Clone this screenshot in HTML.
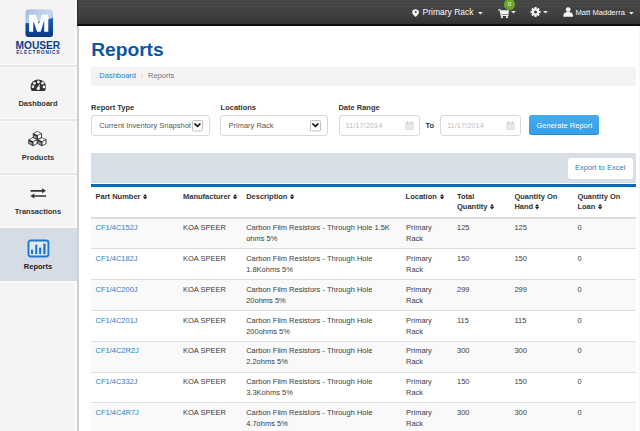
<!DOCTYPE html>
<html><head><meta charset="utf-8"><title>Reports</title>
<style>
html,body{margin:0;padding:0;width:640px;height:431px;overflow:hidden;background:#fff;font-family:"Liberation Sans",sans-serif;}
.t{position:absolute;white-space:nowrap;font-family:"Liberation Sans",sans-serif;}
svg{display:block}
</style></head><body>
<div style="position:absolute;left:0;top:0;width:77px;height:431px;background:#f4f4f4"></div>
<div style="position:absolute;left:74px;top:0;width:3px;height:431px;background:#f8f8f8"></div>
<div style="position:absolute;left:77px;top:25px;width:2px;height:406px;background:#cdd0d4"></div>
<div style="position:absolute;left:0;top:64px;width:77px;height:1px;background:#fbfbfb"></div>
<div style="position:absolute;left:0;top:65px;width:77px;height:1.6px;background:#e6e6e6"></div>
<div style="position:absolute;left:0;top:66.6px;width:77px;height:0.8px;background:#fafafa"></div>
<div style="position:absolute;left:0;top:118.2px;width:77px;height:1px;background:#fbfbfb"></div>
<div style="position:absolute;left:0;top:119.2px;width:77px;height:1.6px;background:#e6e6e6"></div>
<div style="position:absolute;left:0;top:120.8px;width:77px;height:0.8px;background:#fafafa"></div>
<div style="position:absolute;left:0;top:172px;width:77px;height:1px;background:#fbfbfb"></div>
<div style="position:absolute;left:0;top:173px;width:77px;height:1.6px;background:#e6e6e6"></div>
<div style="position:absolute;left:0;top:174.6px;width:77px;height:0.8px;background:#fafafa"></div>
<div style="position:absolute;left:0;top:227px;width:77px;height:1px;background:#fbfbfb"></div>
<div style="position:absolute;left:0;top:228px;width:77px;height:53.3px;background:#d5dce5"></div>
<div style="position:absolute;left:0;top:281.3px;width:77px;height:2px;background:#fafafa"></div>
<svg style="position:absolute;left:24.7px;top:9.3px" width="28.5" height="28.5" viewBox="0 0 28.5 28.5">
<defs><linearGradient id="lgt" x1="0" y1="0" x2="1" y2="1">
<stop offset="0" stop-color="#9dbbe0"/><stop offset="0.5" stop-color="#c9daee"/><stop offset="1" stop-color="#7fa6d4"/></linearGradient>
<linearGradient id="lgb" x1="0" y1="0" x2="0" y2="1">
<stop offset="0" stop-color="#1666b8"/><stop offset="0.5" stop-color="#0d4c9e"/><stop offset="1" stop-color="#083783"/></linearGradient>
<clipPath id="cp"><rect x="0.5" y="0.5" width="27.5" height="27.5" rx="3"/></clipPath></defs>
<g clip-path="url(#cp)">
<rect x="0" y="0" width="28.5" height="28.5" fill="url(#lgt)"/>
<path d="M0 14.3 C9 13.8 18 12.5 28.5 8.6 L28.5 28.5 L0 28.5 Z" fill="url(#lgb)"/>
</g>
<path d="M4.1 5.8 L10.9 5.8 L13.9 15.2 L16.9 5.8 L23.3 5.8 L23.3 22.7 L19.2 22.7 L19.2 11.2 L15.7 22.7 L12.1 22.7 L8.2 11.2 L8.2 22.7 L4.1 22.7 Z" fill="#fff"/>
</svg>
<div class="t" style="left:15.6px;top:40.98px;font-size:10.2px;line-height:10.2px;font-weight:bold;color:#0d3f8f;letter-spacing:-0.05px;transform:scaleY(1.02);transform-origin:top left">MOUSER</div>
<div class="t" style="left:16.2px;top:51.24px;font-size:4.8px;line-height:4.8px;font-weight:bold;color:#0d3f8f;letter-spacing:0.9px">ELECTRONICS</div>
<div class="t" style="left:-2px;width:80px;text-align:center;top:100.21px;font-size:7.5px;line-height:7.5px;font-weight:bold;color:#333;transform:scaleY(1.05);transform-origin:0 6.35px">Dashboard</div>
<div class="t" style="left:-2px;width:80px;text-align:center;top:154.41px;font-size:7.5px;line-height:7.5px;font-weight:bold;color:#333;transform:scaleY(1.05);transform-origin:0 6.35px">Products</div>
<div class="t" style="left:-2px;width:80px;text-align:center;top:208.21px;font-size:7.5px;line-height:7.5px;font-weight:bold;color:#333;transform:scaleY(1.05);transform-origin:0 6.35px">Transactions</div>
<div class="t" style="left:-2px;width:80px;text-align:center;top:263.11px;font-size:7.5px;line-height:7.5px;font-weight:bold;color:#222;transform:scaleY(1.05);transform-origin:0 6.35px">Reports</div>
<svg style="position:absolute;left:29.6px;top:78.9px" width="16.5" height="13" viewBox="0 0 16.5 13">
<path d="M8.25 0.4 A7.7 7.4 0 0 1 15.95 7.8 C15.95 9.4 15.5 10.8 14.8 11.9 L1.7 11.9 C1 10.8 0.55 9.4 0.55 7.8 A7.7 7.4 0 0 1 8.25 0.4 Z" fill="#333"/>
<circle cx="8.4" cy="2.9" r="1.35" fill="#f6f6f6"/><circle cx="4.4" cy="4.3" r="1.35" fill="#f6f6f6"/><circle cx="12.5" cy="4.2" r="1.35" fill="#f6f6f6"/>
<circle cx="3" cy="7.7" r="1.35" fill="#f6f6f6"/><circle cx="14" cy="7.9" r="1.35" fill="#f6f6f6"/>
<path d="M7.1 9.4 L9.6 4.4 L9.6 9.6 Z" fill="#f6f6f6"/><circle cx="8.3" cy="9.6" r="1.6" fill="#f6f6f6"/>
</svg>
<svg style="position:absolute;left:28px;top:131.2px" width="20" height="16" viewBox="0 0 20 16"><g transform="translate(4.8,0)"><path d="M0 2.4 L4.6 0 L9.2 2.4 L9.2 6.6 L4.6 9 L0 6.6 Z" fill="#333"/><path d="M1.3 2.4 L4.6 0.75 L7.9 2.4 L4.6 4.05 Z" fill="#fafafa"/><path d="M5.2 4.6 L8.3 3.1 L8.3 6.2 L5.2 7.75 Z" fill="#fafafa"/><path d="M0.9 4.3 L3.9 5.8 L3.9 7.7 L0.9 6.2 Z" fill="#fafafa" opacity="0.55"/></g><g transform="translate(0.3,6.2)"><path d="M0 2.4 L4.6 0 L9.2 2.4 L9.2 6.6 L4.6 9 L0 6.6 Z" fill="#333"/><path d="M1.3 2.4 L4.6 0.75 L7.9 2.4 L4.6 4.05 Z" fill="#fafafa"/><path d="M5.2 4.6 L8.3 3.1 L8.3 6.2 L5.2 7.75 Z" fill="#fafafa"/><path d="M0.9 4.3 L3.9 5.8 L3.9 7.7 L0.9 6.2 Z" fill="#fafafa" opacity="0.55"/></g><g transform="translate(9.3,6.2)"><path d="M0 2.4 L4.6 0 L9.2 2.4 L9.2 6.6 L4.6 9 L0 6.6 Z" fill="#333"/><path d="M1.3 2.4 L4.6 0.75 L7.9 2.4 L4.6 4.05 Z" fill="#fafafa"/><path d="M5.2 4.6 L8.3 3.1 L8.3 6.2 L5.2 7.75 Z" fill="#fafafa"/><path d="M0.9 4.3 L3.9 5.8 L3.9 7.7 L0.9 6.2 Z" fill="#fafafa" opacity="0.55"/></g></svg>
<svg style="position:absolute;left:29px;top:186.5px" width="18" height="12" viewBox="0 0 18 12">
<path d="M2.2 3.8 L14 3.8" stroke="#333" stroke-width="1.7" stroke-linecap="round"/><path d="M13 1.3 L17 3.8 L13 6.2 Z" fill="#333"/>
<path d="M4 9 L16.4 9" stroke="#333" stroke-width="1.7" stroke-linecap="round"/><path d="M5.3 6.6 L1.4 9 L5.3 11.4 Z" fill="#333"/>
</svg>
<svg style="position:absolute;left:27px;top:238.5px" width="23" height="19" viewBox="0 0 23 19">
<rect x="1.5" y="1.5" width="19.9" height="16" rx="2.2" fill="#e3e8ee" stroke="#1a78cf" stroke-width="1.9"/>
<rect x="4" y="10.6" width="2.1" height="4.6" rx="0.8" fill="#1a78cf"/><rect x="8.2" y="5.5" width="2.1" height="9.7" rx="0.8" fill="#1a78cf"/>
<rect x="12.1" y="8.5" width="2.1" height="6.7" rx="0.8" fill="#1a78cf"/><rect x="16.3" y="4.5" width="2.3" height="10.7" rx="0.8" fill="#1a78cf"/>
</svg>
<div style="position:absolute;left:77px;top:0;width:563px;height:25px;background:linear-gradient(#464646,#404040 55%,#363636 88%,#2e2e2e);"></div>
<div style="position:absolute;left:77px;top:24px;width:563px;height:1.6px;background:#0e0e0e"></div>
<div style="position:absolute;left:78px;top:1.7px;width:562px;height:3.2px;background-image:radial-gradient(circle at 1.5px 1.6px, rgba(255,255,255,0.065) 0.7px, transparent 1.1px);background-size:3px 3.2px"></div>
<div style="position:absolute;left:79.5px;top:4.9px;width:560px;height:3.2px;background-image:radial-gradient(circle at 1.5px 1.6px, rgba(255,255,255,0.055) 0.7px, transparent 1.1px);background-size:3px 3.2px"></div>
<div style="position:absolute;left:77px;top:0;width:1px;height:25px;background:#2a2a2a"></div>
<svg style="position:absolute;left:411.6px;top:9.0px" width="7.5" height="8.2" viewBox="0 0 7.5 8.2">
<path d="M3.6 0.2 C5.6 0.2 7.1 1.5 7.1 3.2 C7.1 4.6 5.3 6.6 3.6 7.9 C1.9 6.6 0.1 4.6 0.1 3.2 C0.1 1.5 1.6 0.2 3.6 0.2 Z" fill="#f6f6f6"/><circle cx="3.7" cy="2.9" r="0.95" fill="#3a3a3a"/></svg>
<div class="t" style="left:422.5px;top:8.25px;font-size:8.53px;line-height:8.53px;font-weight:normal;color:#fafafa;">Primary Rack</div>
<svg style="position:absolute;left:477.6px;top:12.3px" width="5" height="3" viewBox="0 0 5 3"><path d="M0 0 L4.8 0 L2.4 2.6 Z" fill="#ececec"/></svg>
<svg style="position:absolute;left:497.5px;top:8.5px" width="12" height="10" viewBox="0 0 12 10">
<path d="M0.3 0.8 L2 0.8 L3.3 6.3 L10.6 6.3" fill="none" stroke="#f4f4f4" stroke-width="1.2"/>
<path d="M2.3 1.2 L11.1 1.2 L10.4 5.2 L3 5.2 Z" fill="#f4f4f4"/>
<circle cx="3.9" cy="8.2" r="1.1" fill="#f4f4f4"/><circle cx="9" cy="8.2" r="1.1" fill="#f4f4f4"/></svg>
<svg style="position:absolute;left:511.1px;top:11.4px" width="5" height="3" viewBox="0 0 5 3"><path d="M0 0 L4.8 0 L2.4 2.6 Z" fill="#ececec"/></svg>
<div style="position:absolute;left:504px;top:-0.6px;width:10.8px;height:10.6px;border-radius:50%;background:#6aa52a"></div>
<div class="t" style="left:507.7px;top:1.22px;font-size:6.2px;line-height:6.2px;font-weight:normal;color:#f4f8ee;">0</div>
<svg style="position:absolute;left:530.2px;top:7.3px" width="11" height="10" viewBox="0 0 11 10">
<g transform="translate(5.5,5)" fill="#f2f2f2">
<circle r="3.6"/>
<rect x="-1.1" y="-5" width="2.2" height="10" />
<rect x="-1.1" y="-5" width="2.2" height="10" transform="rotate(45)"/>
<rect x="-1.1" y="-5" width="2.2" height="10" transform="rotate(90)"/>
<rect x="-1.1" y="-5" width="2.2" height="10" transform="rotate(135)"/>
<circle r="1.5" fill="#404040"/></g></svg>
<svg style="position:absolute;left:543.0px;top:11.4px" width="5" height="3" viewBox="0 0 5 3"><path d="M0 0 L4.8 0 L2.4 2.6 Z" fill="#ececec"/></svg>
<svg style="position:absolute;left:562.8px;top:7.3px" width="10.5" height="10.5" viewBox="0 0 10.5 10.5">
<circle cx="5.2" cy="2.6" r="2.45" fill="#f4f4f4"/><path d="M0.3 9.7 C0.3 6.1 2 4.9 5.2 4.9 C8.4 4.9 10.1 6.1 10.1 9.7 Z" fill="#f4f4f4"/></svg>
<div class="t" style="left:575.5px;top:8.80px;font-size:7.6px;line-height:7.6px;font-weight:normal;color:#fafafa;">Matt Madderra</div>
<svg style="position:absolute;left:628.5px;top:11.9px" width="5" height="3" viewBox="0 0 5 3"><path d="M0 0 L4.8 0 L2.4 2.6 Z" fill="#ececec"/></svg>
<div style="position:absolute;left:639px;top:26px;width:1px;height:405px;background:#f6f6f6"></div>
<div class="t" style="left:91.2px;top:39.56px;font-size:19.2px;line-height:19.2px;font-weight:bold;color:#0d56a6;">Reports</div>
<div style="position:absolute;left:91px;top:66.5px;width:545px;height:19px;background:#f3f3f3;border-radius:2px"></div>
<div class="t" style="left:99.3px;top:72.31px;font-size:7.5px;line-height:7.5px;font-weight:normal;color:#2a80c2;transform:scaleY(1.05);transform-origin:0 6.35px;">Dashboard</div>
<div class="t" style="left:141px;top:72.31px;font-size:7.5px;line-height:7.5px;font-weight:normal;color:#cfcfcf;transform:scaleY(1.05);transform-origin:0 6.35px;">/</div>
<div class="t" style="left:148px;top:72.31px;font-size:7.5px;line-height:7.5px;font-weight:normal;color:#777;transform:scaleY(1.05);transform-origin:0 6.35px;">Reports</div>
<div class="t" style="left:91.1px;top:103.91px;font-size:7.5px;line-height:7.5px;font-weight:bold;color:#333;transform:scaleY(1.05);transform-origin:0 6.35px;">Report Type</div>
<div class="t" style="left:220.6px;top:103.91px;font-size:7.5px;line-height:7.5px;font-weight:bold;color:#333;transform:scaleY(1.05);transform-origin:0 6.35px;">Locations</div>
<div class="t" style="left:338.4px;top:103.91px;font-size:7.5px;line-height:7.5px;font-weight:bold;color:#333;transform:scaleY(1.05);transform-origin:0 6.35px;">Date Range</div>
<div style="position:absolute;left:91px;top:115.3px;width:117.30000000000001px;height:19.200000000000003px;border:1px solid #d9d9d9;border-radius:3px;background:#fff"></div>
<div class="t" style="left:99.2px;top:122.21px;font-size:7.5px;line-height:7.5px;font-weight:normal;color:#555;transform:scaleY(1.05);transform-origin:0 6.35px;">Current Inventory Snapshot</div>
<svg style="position:absolute;left:192.2px;top:120.1px" width="11" height="11.5" viewBox="0 0 11 11.5"><rect x="0.5" y="0.5" width="10" height="10.5" rx="1" fill="#fbfbfb" stroke="#c2c2c2" stroke-width="1"/><path d="M2.4 3.5 L5.4 6.4 L8.4 3.5" fill="none" stroke="#111" stroke-width="1.7"/></svg>
<div style="position:absolute;left:220.2px;top:115.3px;width:105.80000000000001px;height:19.200000000000003px;border:1px solid #d9d9d9;border-radius:3px;background:#fff"></div>
<div class="t" style="left:228.5px;top:122.21px;font-size:7.5px;line-height:7.5px;font-weight:normal;color:#555;transform:scaleY(1.05);transform-origin:0 6.35px;">Primary Rack</div>
<svg style="position:absolute;left:310.3px;top:120.2px" width="11" height="11.5" viewBox="0 0 11 11.5"><rect x="0.5" y="0.5" width="10" height="10.5" rx="1" fill="#fbfbfb" stroke="#c2c2c2" stroke-width="1"/><path d="M2.4 3.5 L5.4 6.4 L8.4 3.5" fill="none" stroke="#111" stroke-width="1.7"/></svg>
<div style="position:absolute;left:338.6px;top:115.3px;width:79.0px;height:19.200000000000003px;border:1px solid #d9d9d9;border-radius:3px;background:#fff"></div>
<div class="t" style="left:345.4px;top:122.21px;font-size:7.5px;line-height:7.5px;font-weight:normal;color:#bdbdbd;transform:scaleY(1.05);transform-origin:0 6.35px;">11/17/2014</div>
<svg style="position:absolute;left:404.9px;top:120.7px" width="9" height="9" viewBox="0 0 9 9"><rect x="0.3" y="1.6" width="8.4" height="7.2" fill="#dcdcdc"/><rect x="1.3" y="3.4" width="6.4" height="4.6" fill="#ececec"/><path d="M3.2 3.4 V8 M5.3 3.4 V8 M1.3 5.7 H7.7" stroke="#e0e0e0" stroke-width="0.5"/><rect x="1.8" y="0.2" width="1.4" height="2.4" rx="0.5" fill="#cfcfcf"/><rect x="5.8" y="0.2" width="1.4" height="2.4" rx="0.5" fill="#cfcfcf"/></svg>
<div class="t" style="left:425.6px;top:122.01px;font-size:7.5px;line-height:7.5px;font-weight:bold;color:#333;transform:scaleY(1.05);transform-origin:0 6.35px;">To</div>
<div style="position:absolute;left:439.6px;top:115.3px;width:79.19999999999993px;height:19.200000000000003px;border:1px solid #d9d9d9;border-radius:3px;background:#fff"></div>
<div class="t" style="left:446.9px;top:122.21px;font-size:7.5px;line-height:7.5px;font-weight:normal;color:#bdbdbd;transform:scaleY(1.05);transform-origin:0 6.35px;">11/17/2014</div>
<svg style="position:absolute;left:506.1px;top:120.8px" width="9" height="9" viewBox="0 0 9 9"><rect x="0.3" y="1.6" width="8.4" height="7.2" fill="#dcdcdc"/><rect x="1.3" y="3.4" width="6.4" height="4.6" fill="#ececec"/><path d="M3.2 3.4 V8 M5.3 3.4 V8 M1.3 5.7 H7.7" stroke="#e0e0e0" stroke-width="0.5"/><rect x="1.8" y="0.2" width="1.4" height="2.4" rx="0.5" fill="#cfcfcf"/><rect x="5.8" y="0.2" width="1.4" height="2.4" rx="0.5" fill="#cfcfcf"/></svg>
<div style="position:absolute;left:529px;top:115.2px;width:69.8px;height:19px;border-radius:2.5px;background:linear-gradient(#44abee,#369fe6);border-bottom:1px solid #2b8bd3"></div>
<div class="t" style="left:536.5px;top:121.91px;font-size:7.5px;line-height:7.5px;font-weight:normal;color:#fff;transform:scaleY(1.05);transform-origin:0 6.35px;">Generate Report</div>
<div style="position:absolute;left:91px;top:153px;width:545px;height:30.2px;background:#d8dee6"></div>
<div style="position:absolute;left:91px;top:184px;width:545px;height:3px;background:#0869b8"></div>
<div style="position:absolute;left:568px;top:158px;width:65px;height:21px;background:#fff;border-radius:3px"></div>
<div class="t" style="left:575px;top:164.11px;font-size:7.5px;line-height:7.5px;font-weight:normal;color:#2a80c2;transform:scaleY(1.05);transform-origin:0 6.35px;">Export to Excel</div>
<div class="t" style="left:95.5px;top:192.81px;font-size:7.5px;line-height:7.5px;font-weight:bold;color:#333;transform:scaleY(1.05);transform-origin:0 6.35px;">Part Number</div>
<svg style="position:absolute;left:143px;top:193.60px" width="4.2" height="5.6" viewBox="0 0 4.2 5.6"><path d="M0 2.5 L2.1 0 L4.2 2.5 Z M0 3.1 L4.2 3.1 L2.1 5.6 Z" fill="#222"/></svg>
<div class="t" style="left:183px;top:192.81px;font-size:7.5px;line-height:7.5px;font-weight:bold;color:#333;transform:scaleY(1.05);transform-origin:0 6.35px;">Manufacturer</div>
<svg style="position:absolute;left:233px;top:193.60px" width="4.2" height="5.6" viewBox="0 0 4.2 5.6"><path d="M0 2.5 L2.1 0 L4.2 2.5 Z M0 3.1 L4.2 3.1 L2.1 5.6 Z" fill="#222"/></svg>
<div class="t" style="left:246.2px;top:192.81px;font-size:7.5px;line-height:7.5px;font-weight:bold;color:#333;transform:scaleY(1.05);transform-origin:0 6.35px;">Description</div>
<svg style="position:absolute;left:289.6px;top:193.60px" width="4.2" height="5.6" viewBox="0 0 4.2 5.6"><path d="M0 2.5 L2.1 0 L4.2 2.5 Z M0 3.1 L4.2 3.1 L2.1 5.6 Z" fill="#222"/></svg>
<div class="t" style="left:405.6px;top:192.81px;font-size:7.5px;line-height:7.5px;font-weight:bold;color:#333;transform:scaleY(1.05);transform-origin:0 6.35px;">Location</div>
<svg style="position:absolute;left:440.2px;top:193.60px" width="4.2" height="5.6" viewBox="0 0 4.2 5.6"><path d="M0 2.5 L2.1 0 L4.2 2.5 Z M0 3.1 L4.2 3.1 L2.1 5.6 Z" fill="#222"/></svg>
<div class="t" style="left:457px;top:192.81px;font-size:7.5px;line-height:7.5px;font-weight:bold;color:#333;transform:scaleY(1.05);transform-origin:0 6.35px;">Total</div>
<div class="t" style="left:457px;top:203.41px;font-size:7.5px;line-height:7.5px;font-weight:bold;color:#333;transform:scaleY(1.05);transform-origin:0 6.35px;">Quantity</div>
<svg style="position:absolute;left:489.5px;top:204.20px" width="4.2" height="5.6" viewBox="0 0 4.2 5.6"><path d="M0 2.5 L2.1 0 L4.2 2.5 Z M0 3.1 L4.2 3.1 L2.1 5.6 Z" fill="#222"/></svg>
<div class="t" style="left:514.4px;top:192.81px;font-size:7.5px;line-height:7.5px;font-weight:bold;color:#333;transform:scaleY(1.05);transform-origin:0 6.35px;">Quantity On</div>
<div class="t" style="left:514.4px;top:203.41px;font-size:7.5px;line-height:7.5px;font-weight:bold;color:#333;transform:scaleY(1.05);transform-origin:0 6.35px;">Hand</div>
<svg style="position:absolute;left:534.6px;top:204.20px" width="4.2" height="5.6" viewBox="0 0 4.2 5.6"><path d="M0 2.5 L2.1 0 L4.2 2.5 Z M0 3.1 L4.2 3.1 L2.1 5.6 Z" fill="#222"/></svg>
<div class="t" style="left:577.4px;top:192.81px;font-size:7.5px;line-height:7.5px;font-weight:bold;color:#333;transform:scaleY(1.05);transform-origin:0 6.35px;">Quantity On</div>
<div class="t" style="left:577.4px;top:203.41px;font-size:7.5px;line-height:7.5px;font-weight:bold;color:#333;transform:scaleY(1.05);transform-origin:0 6.35px;">Loan</div>
<svg style="position:absolute;left:597.6px;top:204.20px" width="4.2" height="5.6" viewBox="0 0 4.2 5.6"><path d="M0 2.5 L2.1 0 L4.2 2.5 Z M0 3.1 L4.2 3.1 L2.1 5.6 Z" fill="#222"/></svg>
<div style="position:absolute;left:91px;top:217px;width:545px;height:2px;background:#dcdcdc"></div>
<div style="position:absolute;left:91px;top:219px;width:545px;height:29.19999999999999px;background:#f9f9f9"></div>
<div style="position:absolute;left:91px;top:248.2px;width:545px;height:1px;background:#dedede"></div>
<div class="t" style="left:95.5px;top:224.11px;font-size:7.5px;line-height:7.5px;font-weight:normal;color:#2a80c2;transform:scaleY(1.05);transform-origin:0 6.35px;">CF1/4C152J</div>
<div class="t" style="left:183px;top:224.11px;font-size:7.5px;line-height:7.5px;font-weight:normal;color:#3c3c3c;transform:scaleY(1.05);transform-origin:0 6.35px;">KOA SPEER</div>
<div class="t" style="left:246.2px;top:224.11px;font-size:7.5px;line-height:7.5px;font-weight:normal;color:#3c3c3c;transform:scaleY(1.05);transform-origin:0 6.35px;">Carbon Film Resistors - Through Hole 1.5K</div>
<div class="t" style="left:246.2px;top:235.11px;font-size:7.5px;line-height:7.5px;font-weight:normal;color:#3c3c3c;transform:scaleY(1.05);transform-origin:0 6.35px;">ohms 5%</div>
<div class="t" style="left:406px;top:224.11px;font-size:7.5px;line-height:7.5px;font-weight:normal;color:#3c3c3c;transform:scaleY(1.05);transform-origin:0 6.35px;">Primary</div>
<div class="t" style="left:406px;top:235.11px;font-size:7.5px;line-height:7.5px;font-weight:normal;color:#3c3c3c;transform:scaleY(1.05);transform-origin:0 6.35px;">Rack</div>
<div class="t" style="left:457px;top:224.11px;font-size:7.5px;line-height:7.5px;font-weight:normal;color:#3c3c3c;transform:scaleY(1.05);transform-origin:0 6.35px;">125</div>
<div class="t" style="left:514.4px;top:224.11px;font-size:7.5px;line-height:7.5px;font-weight:normal;color:#3c3c3c;transform:scaleY(1.05);transform-origin:0 6.35px;">125</div>
<div class="t" style="left:577.4px;top:224.11px;font-size:7.5px;line-height:7.5px;font-weight:normal;color:#3c3c3c;transform:scaleY(1.05);transform-origin:0 6.35px;">0</div>
<div style="position:absolute;left:91px;top:279.04px;width:545px;height:1px;background:#dedede"></div>
<div class="t" style="left:95.5px;top:254.95px;font-size:7.5px;line-height:7.5px;font-weight:normal;color:#2a80c2;transform:scaleY(1.05);transform-origin:0 6.35px;">CF1/4C182J</div>
<div class="t" style="left:183px;top:254.95px;font-size:7.5px;line-height:7.5px;font-weight:normal;color:#3c3c3c;transform:scaleY(1.05);transform-origin:0 6.35px;">KOA SPEER</div>
<div class="t" style="left:246.2px;top:254.95px;font-size:7.5px;line-height:7.5px;font-weight:normal;color:#3c3c3c;transform:scaleY(1.05);transform-origin:0 6.35px;">Carbon Film Resistors - Through Hole</div>
<div class="t" style="left:246.2px;top:265.95px;font-size:7.5px;line-height:7.5px;font-weight:normal;color:#3c3c3c;transform:scaleY(1.05);transform-origin:0 6.35px;">1.8Kohms 5%</div>
<div class="t" style="left:406px;top:254.95px;font-size:7.5px;line-height:7.5px;font-weight:normal;color:#3c3c3c;transform:scaleY(1.05);transform-origin:0 6.35px;">Primary</div>
<div class="t" style="left:406px;top:265.95px;font-size:7.5px;line-height:7.5px;font-weight:normal;color:#3c3c3c;transform:scaleY(1.05);transform-origin:0 6.35px;">Rack</div>
<div class="t" style="left:457px;top:254.95px;font-size:7.5px;line-height:7.5px;font-weight:normal;color:#3c3c3c;transform:scaleY(1.05);transform-origin:0 6.35px;">150</div>
<div class="t" style="left:514.4px;top:254.95px;font-size:7.5px;line-height:7.5px;font-weight:normal;color:#3c3c3c;transform:scaleY(1.05);transform-origin:0 6.35px;">150</div>
<div class="t" style="left:577.4px;top:254.95px;font-size:7.5px;line-height:7.5px;font-weight:normal;color:#3c3c3c;transform:scaleY(1.05);transform-origin:0 6.35px;">0</div>
<div style="position:absolute;left:91px;top:280.04px;width:545px;height:29.839999999999975px;background:#f9f9f9"></div>
<div style="position:absolute;left:91px;top:309.88px;width:545px;height:1px;background:#dedede"></div>
<div class="t" style="left:95.5px;top:285.79px;font-size:7.5px;line-height:7.5px;font-weight:normal;color:#2a80c2;transform:scaleY(1.05);transform-origin:0 6.35px;">CF1/4C200J</div>
<div class="t" style="left:183px;top:285.79px;font-size:7.5px;line-height:7.5px;font-weight:normal;color:#3c3c3c;transform:scaleY(1.05);transform-origin:0 6.35px;">KOA SPEER</div>
<div class="t" style="left:246.2px;top:285.79px;font-size:7.5px;line-height:7.5px;font-weight:normal;color:#3c3c3c;transform:scaleY(1.05);transform-origin:0 6.35px;">Carbon Film Resistors - Through Hole</div>
<div class="t" style="left:246.2px;top:296.79px;font-size:7.5px;line-height:7.5px;font-weight:normal;color:#3c3c3c;transform:scaleY(1.05);transform-origin:0 6.35px;">20ohms 5%</div>
<div class="t" style="left:406px;top:285.79px;font-size:7.5px;line-height:7.5px;font-weight:normal;color:#3c3c3c;transform:scaleY(1.05);transform-origin:0 6.35px;">Primary</div>
<div class="t" style="left:406px;top:296.79px;font-size:7.5px;line-height:7.5px;font-weight:normal;color:#3c3c3c;transform:scaleY(1.05);transform-origin:0 6.35px;">Rack</div>
<div class="t" style="left:457px;top:285.79px;font-size:7.5px;line-height:7.5px;font-weight:normal;color:#3c3c3c;transform:scaleY(1.05);transform-origin:0 6.35px;">299</div>
<div class="t" style="left:514.4px;top:285.79px;font-size:7.5px;line-height:7.5px;font-weight:normal;color:#3c3c3c;transform:scaleY(1.05);transform-origin:0 6.35px;">299</div>
<div class="t" style="left:577.4px;top:285.79px;font-size:7.5px;line-height:7.5px;font-weight:normal;color:#3c3c3c;transform:scaleY(1.05);transform-origin:0 6.35px;">0</div>
<div style="position:absolute;left:91px;top:340.72px;width:545px;height:1px;background:#dedede"></div>
<div class="t" style="left:95.5px;top:316.63px;font-size:7.5px;line-height:7.5px;font-weight:normal;color:#2a80c2;transform:scaleY(1.05);transform-origin:0 6.35px;">CF1/4C201J</div>
<div class="t" style="left:183px;top:316.63px;font-size:7.5px;line-height:7.5px;font-weight:normal;color:#3c3c3c;transform:scaleY(1.05);transform-origin:0 6.35px;">KOA SPEER</div>
<div class="t" style="left:246.2px;top:316.63px;font-size:7.5px;line-height:7.5px;font-weight:normal;color:#3c3c3c;transform:scaleY(1.05);transform-origin:0 6.35px;">Carbon Film Resistors - Through Hole</div>
<div class="t" style="left:246.2px;top:327.63px;font-size:7.5px;line-height:7.5px;font-weight:normal;color:#3c3c3c;transform:scaleY(1.05);transform-origin:0 6.35px;">200ohms 5%</div>
<div class="t" style="left:406px;top:316.63px;font-size:7.5px;line-height:7.5px;font-weight:normal;color:#3c3c3c;transform:scaleY(1.05);transform-origin:0 6.35px;">Primary</div>
<div class="t" style="left:406px;top:327.63px;font-size:7.5px;line-height:7.5px;font-weight:normal;color:#3c3c3c;transform:scaleY(1.05);transform-origin:0 6.35px;">Rack</div>
<div class="t" style="left:457px;top:316.63px;font-size:7.5px;line-height:7.5px;font-weight:normal;color:#3c3c3c;transform:scaleY(1.05);transform-origin:0 6.35px;">115</div>
<div class="t" style="left:514.4px;top:316.63px;font-size:7.5px;line-height:7.5px;font-weight:normal;color:#3c3c3c;transform:scaleY(1.05);transform-origin:0 6.35px;">115</div>
<div class="t" style="left:577.4px;top:316.63px;font-size:7.5px;line-height:7.5px;font-weight:normal;color:#3c3c3c;transform:scaleY(1.05);transform-origin:0 6.35px;">0</div>
<div style="position:absolute;left:91px;top:341.72px;width:545px;height:29.839999999999975px;background:#f9f9f9"></div>
<div style="position:absolute;left:91px;top:371.56px;width:545px;height:1px;background:#dedede"></div>
<div class="t" style="left:95.5px;top:347.47px;font-size:7.5px;line-height:7.5px;font-weight:normal;color:#2a80c2;transform:scaleY(1.05);transform-origin:0 6.35px;">CF1/4C2R2J</div>
<div class="t" style="left:183px;top:347.47px;font-size:7.5px;line-height:7.5px;font-weight:normal;color:#3c3c3c;transform:scaleY(1.05);transform-origin:0 6.35px;">KOA SPEER</div>
<div class="t" style="left:246.2px;top:347.47px;font-size:7.5px;line-height:7.5px;font-weight:normal;color:#3c3c3c;transform:scaleY(1.05);transform-origin:0 6.35px;">Carbon Film Resistors - Through Hole</div>
<div class="t" style="left:246.2px;top:358.47px;font-size:7.5px;line-height:7.5px;font-weight:normal;color:#3c3c3c;transform:scaleY(1.05);transform-origin:0 6.35px;">2.2ohms 5%</div>
<div class="t" style="left:406px;top:347.47px;font-size:7.5px;line-height:7.5px;font-weight:normal;color:#3c3c3c;transform:scaleY(1.05);transform-origin:0 6.35px;">Primary</div>
<div class="t" style="left:406px;top:358.47px;font-size:7.5px;line-height:7.5px;font-weight:normal;color:#3c3c3c;transform:scaleY(1.05);transform-origin:0 6.35px;">Rack</div>
<div class="t" style="left:457px;top:347.47px;font-size:7.5px;line-height:7.5px;font-weight:normal;color:#3c3c3c;transform:scaleY(1.05);transform-origin:0 6.35px;">300</div>
<div class="t" style="left:514.4px;top:347.47px;font-size:7.5px;line-height:7.5px;font-weight:normal;color:#3c3c3c;transform:scaleY(1.05);transform-origin:0 6.35px;">300</div>
<div class="t" style="left:577.4px;top:347.47px;font-size:7.5px;line-height:7.5px;font-weight:normal;color:#3c3c3c;transform:scaleY(1.05);transform-origin:0 6.35px;">0</div>
<div style="position:absolute;left:91px;top:402.4px;width:545px;height:1px;background:#dedede"></div>
<div class="t" style="left:95.5px;top:378.31px;font-size:7.5px;line-height:7.5px;font-weight:normal;color:#2a80c2;transform:scaleY(1.05);transform-origin:0 6.35px;">CF1/4C332J</div>
<div class="t" style="left:183px;top:378.31px;font-size:7.5px;line-height:7.5px;font-weight:normal;color:#3c3c3c;transform:scaleY(1.05);transform-origin:0 6.35px;">KOA SPEER</div>
<div class="t" style="left:246.2px;top:378.31px;font-size:7.5px;line-height:7.5px;font-weight:normal;color:#3c3c3c;transform:scaleY(1.05);transform-origin:0 6.35px;">Carbon Film Resistors - Through Hole</div>
<div class="t" style="left:246.2px;top:389.31px;font-size:7.5px;line-height:7.5px;font-weight:normal;color:#3c3c3c;transform:scaleY(1.05);transform-origin:0 6.35px;">3.3Kohms 5%</div>
<div class="t" style="left:406px;top:378.31px;font-size:7.5px;line-height:7.5px;font-weight:normal;color:#3c3c3c;transform:scaleY(1.05);transform-origin:0 6.35px;">Primary</div>
<div class="t" style="left:406px;top:389.31px;font-size:7.5px;line-height:7.5px;font-weight:normal;color:#3c3c3c;transform:scaleY(1.05);transform-origin:0 6.35px;">Rack</div>
<div class="t" style="left:457px;top:378.31px;font-size:7.5px;line-height:7.5px;font-weight:normal;color:#3c3c3c;transform:scaleY(1.05);transform-origin:0 6.35px;">150</div>
<div class="t" style="left:514.4px;top:378.31px;font-size:7.5px;line-height:7.5px;font-weight:normal;color:#3c3c3c;transform:scaleY(1.05);transform-origin:0 6.35px;">150</div>
<div class="t" style="left:577.4px;top:378.31px;font-size:7.5px;line-height:7.5px;font-weight:normal;color:#3c3c3c;transform:scaleY(1.05);transform-origin:0 6.35px;">0</div>
<div style="position:absolute;left:91px;top:403.4px;width:545px;height:29.840000000000032px;background:#f9f9f9"></div>
<div style="position:absolute;left:91px;top:433.24px;width:545px;height:1px;background:#dedede"></div>
<div class="t" style="left:95.5px;top:409.15px;font-size:7.5px;line-height:7.5px;font-weight:normal;color:#2a80c2;transform:scaleY(1.05);transform-origin:0 6.35px;">CF1/4C4R7J</div>
<div class="t" style="left:183px;top:409.15px;font-size:7.5px;line-height:7.5px;font-weight:normal;color:#3c3c3c;transform:scaleY(1.05);transform-origin:0 6.35px;">KOA SPEER</div>
<div class="t" style="left:246.2px;top:409.15px;font-size:7.5px;line-height:7.5px;font-weight:normal;color:#3c3c3c;transform:scaleY(1.05);transform-origin:0 6.35px;">Carbon Film Resistors - Through Hole</div>
<div class="t" style="left:246.2px;top:420.15px;font-size:7.5px;line-height:7.5px;font-weight:normal;color:#3c3c3c;transform:scaleY(1.05);transform-origin:0 6.35px;">4.7ohms 5%</div>
<div class="t" style="left:406px;top:409.15px;font-size:7.5px;line-height:7.5px;font-weight:normal;color:#3c3c3c;transform:scaleY(1.05);transform-origin:0 6.35px;">Primary</div>
<div class="t" style="left:406px;top:420.15px;font-size:7.5px;line-height:7.5px;font-weight:normal;color:#3c3c3c;transform:scaleY(1.05);transform-origin:0 6.35px;">Rack</div>
<div class="t" style="left:457px;top:409.15px;font-size:7.5px;line-height:7.5px;font-weight:normal;color:#3c3c3c;transform:scaleY(1.05);transform-origin:0 6.35px;">300</div>
<div class="t" style="left:514.4px;top:409.15px;font-size:7.5px;line-height:7.5px;font-weight:normal;color:#3c3c3c;transform:scaleY(1.05);transform-origin:0 6.35px;">300</div>
<div class="t" style="left:577.4px;top:409.15px;font-size:7.5px;line-height:7.5px;font-weight:normal;color:#3c3c3c;transform:scaleY(1.05);transform-origin:0 6.35px;">0</div>
</body></html>
